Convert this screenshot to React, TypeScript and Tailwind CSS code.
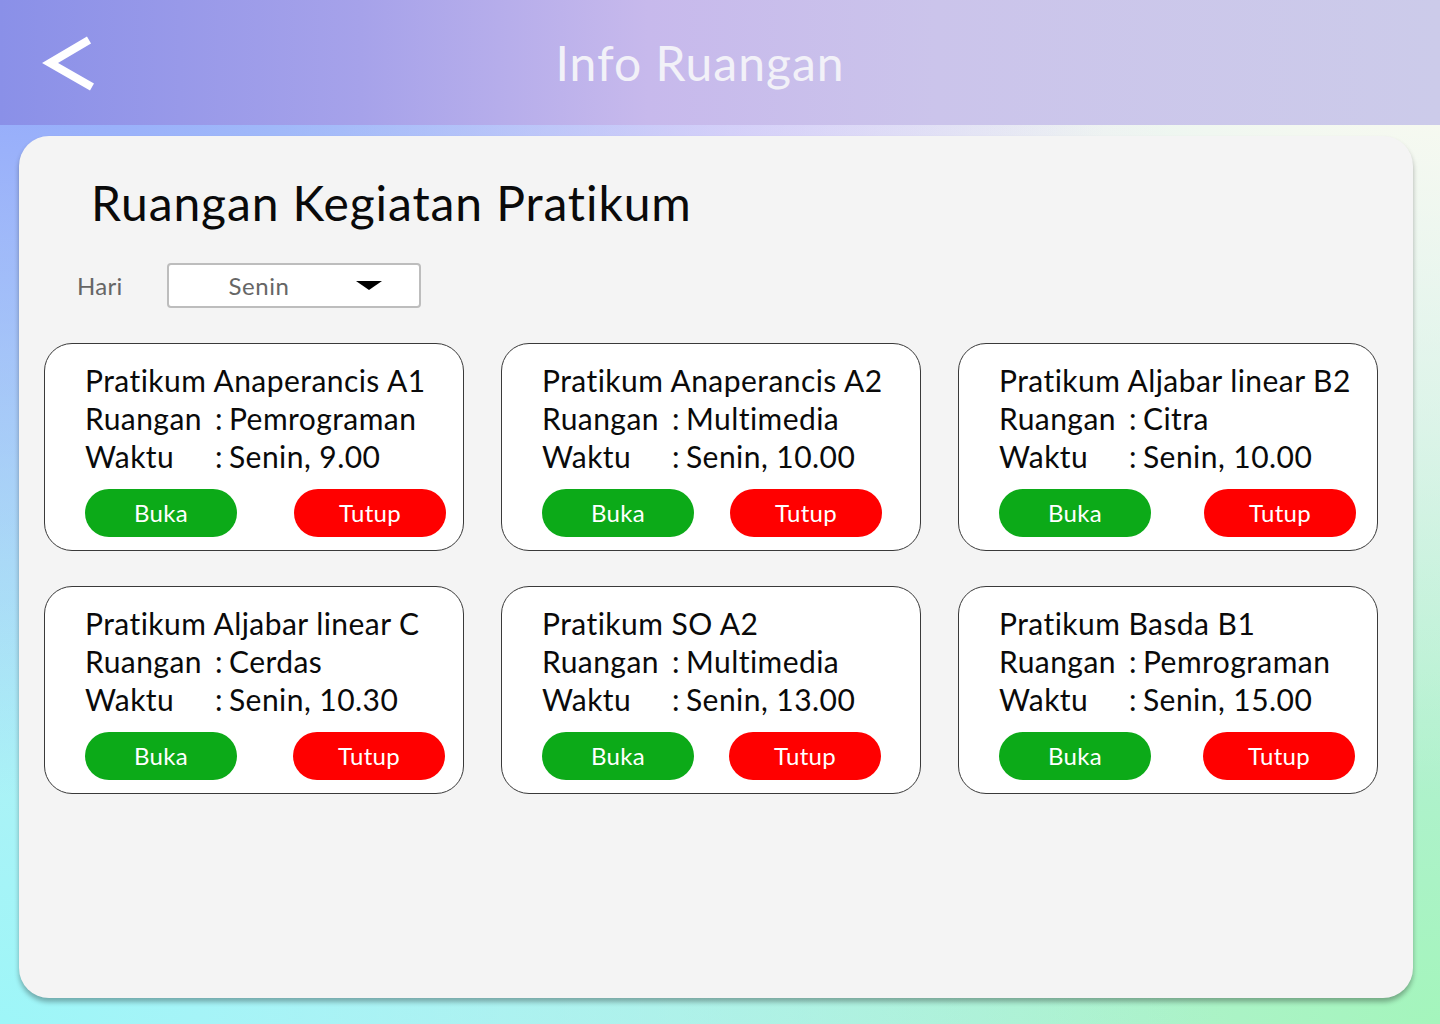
import React from "react";

type Item = { name: string; room: string; time: string; gap: string };

const items: Item[] = [
  { name: "Pratikum Anaperancis A1", room: "Pemrograman", time: "Senin, 9.00", gap: "gap-[57px]" },
  { name: "Pratikum Anaperancis A2", room: "Multimedia", time: "Senin, 10.00", gap: "gap-[36px]" },
  { name: "Pratikum Aljabar linear B2", room: "Citra", time: "Senin, 10.00", gap: "gap-[53px]" },
  { name: "Pratikum Aljabar linear C", room: "Cerdas", time: "Senin, 10.30", gap: "gap-[56px]" },
  { name: "Pratikum SO A2", room: "Multimedia", time: "Senin, 13.00", gap: "gap-[35px]" },
  { name: "Pratikum Basda B1", room: "Pemrograman", time: "Senin, 15.00", gap: "gap-[52px]" },
];

function Card({ item }: { item: Item }) {
  return (
    <div className="h-[208px] w-[420px] rounded-[28px] border border-[#3a3a3a] bg-white pl-[40px] pt-[17px]">
      <div className="text-[30px] leading-[38px] tracking-[0.45px] text-[#0a0a0a]">
        <div className="whitespace-nowrap">{item.name}</div>
        <div className="flex whitespace-nowrap">
          <span className="w-[130px]">Ruangan</span>
          <span>:</span>
          <span className="ml-[6px]">{item.room}</span>
        </div>
        <div className="flex whitespace-nowrap">
          <span className="w-[130px]">Waktu</span>
          <span>:</span>
          <span className="ml-[6px]">{item.time}</span>
        </div>
      </div>
      <div className={"mt-[14px] flex " + item.gap}>
        <button className="h-[48px] w-[152px] rounded-full bg-[#0caa18] text-[24px] tracking-[0.3px] text-white">
          Buka
        </button>
        <button className="h-[48px] w-[152px] rounded-full bg-[#ff0000] text-[24px] tracking-[0.3px] text-white">
          Tutup
        </button>
      </div>
    </div>
  );
}

export default function App() {
  return (
    <div
      className="flex h-[1024px] w-[1440px] flex-col overflow-hidden bg-[#c9e9f2] bg-[radial-gradient(ellipse_at_0%_0%,#8fa4fc_0%,transparent_55%),radial-gradient(ellipse_at_50%_0%,#fbe2f8_0%,transparent_45%),radial-gradient(ellipse_at_100%_0%,#fefcf0_0%,transparent_55%),radial-gradient(ellipse_at_0%_100%,#9ef6f8_0%,transparent_60%),radial-gradient(ellipse_at_100%_100%,#a4f5bc_0%,transparent_60%)]"
      style={{ fontFamily: "Lato, 'Noto Sans', sans-serif" }}
    >
      <header className="flex h-[125px] shrink-0 items-center bg-[linear-gradient(to_right,#8a90e8_0%,#a6a2ea_25%,#c7b9ec_45%,#cbc4eb_65%,#cccbea_100%)] pl-[41px]">
        <svg width="56" height="58" viewBox="0 0 56 58" className="shrink-0">
          <polyline
            points="48,6 9,29 51,53"
            fill="none"
            stroke="#ffffff"
            strokeWidth="8"
            strokeLinejoin="miter"
          />
        </svg>
        <h1 className="flex-1 pr-[137px] text-center text-[48px] leading-[58px] tracking-[1px] text-[#f2f1f8]">
          Info Ruangan
        </h1>
      </header>
      <div className="flex-1 pb-[26px] pl-[19px] pr-[27px] pt-[11px]">
        <main className="h-full rounded-[30px] bg-[#f4f4f4] pl-[25px] pt-[38px] shadow-[0_4px_5px_rgba(0,0,0,0.3)]">
          <h2 className="pl-[47px] text-[48px] leading-[58px] tracking-[0.9px] text-[#0a0a0a]">
            Ruangan Kegiatan Pratikum
          </h2>
          <div className="mt-[31px] flex h-[45px] items-center pl-[33px]">
            <span className="w-[90px] text-[24px] tracking-[0.3px] text-[#666666]">Hari</span>
            <div className="relative flex h-[45px] w-[254px] items-center rounded-[4px] border-2 border-[#bdbdbd] bg-white">
              <span className="w-[180px] text-center text-[24px] tracking-[0.6px] text-[#666666]">Senin</span>
              <svg width="26" height="10" viewBox="0 0 26 10" className="ml-[7px]">
                <polygon points="0,0 26,0 13,9" fill="#000" />
              </svg>
            </div>
          </div>
          <div className="mt-[35px] grid grid-cols-[repeat(3,420px)] gap-x-[37px] gap-y-[35px]">
            {items.map((it) => (
              <Card key={it.name} item={it} />
            ))}
          </div>
        </main>
      </div>
    </div>
  );
}
